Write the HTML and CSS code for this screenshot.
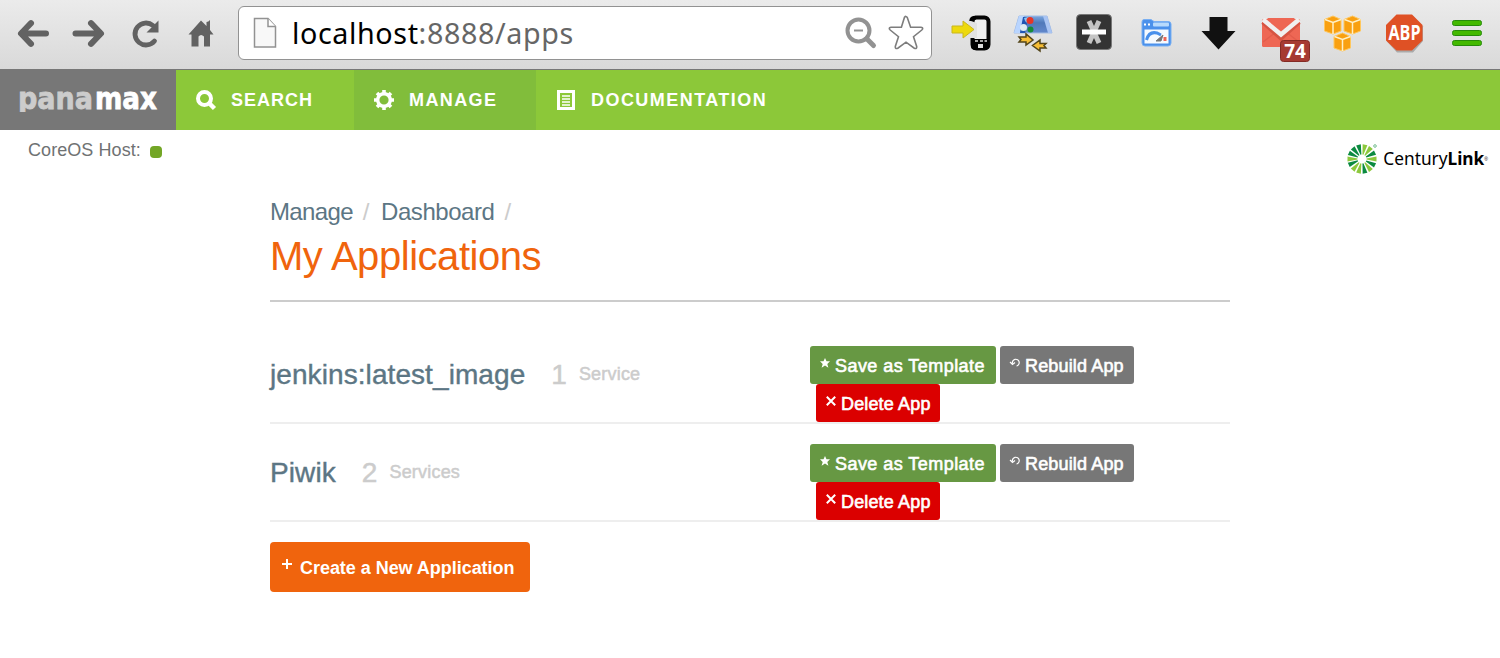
FILE: index.html
```html
<!DOCTYPE html>
<html lang="en">
<head>
<meta charset="utf-8">
<title>Panamax</title>
<link rel="stylesheet" href="styles.css">
</head>
<body>
<div class="toolbar">
  <div class="controls">
    <svg width="34" height="32" viewBox="0 0 34 32"><path class="arrow" d="M30 16.500H6M15 6.200L5 16.500L15 26.800"/></svg>
    <svg width="34" height="32" viewBox="0 0 34 32"><path class="arrow" d="M3.500 16.500H28.500M19 6.200L29 16.500L19 26.800"/></svg>
    <svg width="30" height="32" viewBox="0 0 30 32"><path d="M23.500 24A11 11 0 1 1 22 8.500" fill="none" stroke="#626262" stroke-width="4.800" stroke-linecap="round"/><path d="M27.500 3.500V15.500H15.500Z" fill="#626262"/></svg>
    <svg width="28" height="32" viewBox="0 0 28 32"><path d="M1.500 17.500L14 3.500L19.500 9V5Q21.500 5 23 3V13L26.500 17.500H23V29.500H17V19.500Q14 16.500 11.500 19.500V29.500H4.500V17.500Z" fill="#626262"/></svg>
  </div>
  <div class="omnibox">
    <svg class="page-icon" width="24" height="32" viewBox="0 0 24 32"><path d="M1.500 1.500H15L22.500 9.500V30H1.500Z" fill="#f8f8f8" stroke="#929292" stroke-width="1.500"/><path d="M15 1.500V9.500H22.500" fill="#fff" stroke="#929292" stroke-width="1.500"/></svg>
    <div class="url">localhost<span>:8888/apps</span></div>
    <svg width="32" height="32" viewBox="0 0 32 32"><circle cx="13.500" cy="13.500" r="11" fill="none" stroke="#929292" stroke-width="4"/><path d="M9 13.500H18" stroke="#929292" stroke-width="2"/><path d="M22 22L28.500 28.500" stroke="#929292" stroke-width="5" stroke-linecap="round"/></svg>
    <svg class="star" width="36" height="36" viewBox="0 0 36 36"><path d="M16.500 2.200Q18 .5 19.300 2.500L22.600 12.300H33Q36 13 33.800 15L25.500 21.700L28.700 31.500Q29 34.300 26.300 33.200L18 27.200L9.800 33.200Q7 34.300 7.300 31.500L10.500 21.700L2.200 15Q0 13 3 12.300H13.400Z" fill="#fff" stroke="#7d7d7d" stroke-width="1.600"/></svg>
  </div>
  <div class="extensions">
    <svg width="40" height="40" viewBox="0 0 40 40"><rect x="21.500" y="4.500" width="16" height="31" rx="4" fill="#eee" stroke="#050505" stroke-width="4"/><path d="M20 26H38V34Q38 36 35 37H23Q20 36 20 34Z"/><path d="M17 7L26 10V25H17Z" fill="#e2e2e1"/><path d="M20 8Q20 4.500 25 4.500" fill="none" stroke="#000" stroke-width="3.500"/><path d="M1 13V20H12V25L23 16.500L12 8V13Z" fill="#edd90c" stroke="#c9b61c"/><path d="M24 28H27M29 28H32M33.500 28H36" stroke="#ddd" stroke-width="1.500"/><rect x="27" y="31" width="5" height="4" fill="#ddd"/></svg>
    <svg width="40" height="40" viewBox="0 0 40 40"><defs><linearGradient id="awning" x2="0" y2="1"><stop stop-color="#7ca8e0"/><stop offset=".4" stop-color="#5079ba"/><stop offset="1" stop-color="#6388cc"/></linearGradient></defs><path d="M6 3H34L39 20H1Z" fill="url(#awning)" stroke="#a3bce3"/><path d="M6 3H11L7 20H1Z" fill="#b9d5ff"/><path d="M34 3L39 20H35L30 3Z" fill="#a9c4f3"/><path d="M10 4H15L12 20H7Z" fill="#2055b2"/><path d="M11 5Q13 12 17 9L15 4Z" fill="#8bc4f3"/><circle cx="17" cy="7.500" r="3.500" fill="#e73527"/><circle cx="10.500" cy="14.500" r="3.500" fill="#ddecf2"/><circle cx="17.500" cy="16.500" r="3" fill="#168b36"/><path d="M6 24H13V21L20 27L13 32V29H6L8 26.500Z" fill="#f6bd35" stroke="#54461b" stroke-width="1.500"/><path d="M33 30.500H27V27L19.500 32.500L27 38V35H33L31 32.500Z" fill="#f6bd35" stroke="#54461b" stroke-width="1.500"/></svg>
    <svg width="40" height="40" viewBox="0 0 40 40"><rect x="1.500" y="1.500" width="35" height="35" rx="4" fill="#343434" stroke="#777"/><path d="M14 8L24 30M24 8L14 30" fill="none" stroke="#c5c5c5" stroke-width="5"/><path d="M7 19H31" stroke="#fff" stroke-width="5"/></svg>
    <svg width="40" height="40" viewBox="0 0 40 40"><path d="M5 9Q5 6.500 7 6.500H14L17 8.500H31Q34 8.500 34 11V30Q34 33 31 33H8Q5 33 5 30Z" fill="#4b91eb" stroke="#79aff2"/><path d="M7 11.500H9M11 11.500H13" stroke="#fff" stroke-width="2"/><rect x="16" y="9.500" width="16" height="4" rx="1" fill="#b7dafd"/><rect x="7.500" y="16.500" width="24" height="14" fill="#f5faff"/><path d="M9.500 27Q12 18 20 20L24 22" fill="none" stroke="#4890ec" stroke-width="3"/><path d="M19 28L26 22L24 28Z" fill="#777" stroke="#777"/><path d="M28 24V28" stroke="#ee6556" stroke-width="3"/></svg>
    <svg width="40" height="40" viewBox="0 0 40 40"><path d="M11.500 4H29.500V18H37.500L20.500 36.500L3.500 18H11.500Z" fill="#111"/></svg>
    <svg class="mail" width="50" height="50" viewBox="0 0 50 50"><rect x="2" y="8" width="38" height="28" rx="1.500" fill="#ee6754"/><path d="M3 31L16 21M39 31L26 21" stroke="#e35d4c" stroke-width="1.500"/><path d="M3 11L21 27L39 11" fill="none" stroke="#d65443" stroke-width="5"/><path d="M3 8.500L21 23.500L39 8.500" fill="none" stroke="#f0f0f0" stroke-width="4.500"/><path d="M7 7H35L21 18.500Z" fill="#ee6754"/><rect x="20.500" y="29.500" width="29" height="21" rx="3" fill="#a63a32" stroke="#842b25"/><text x="35" y="47" text-anchor="middle">74</text></svg>
    <svg width="40" height="40" viewBox="0 0 40 40"><g id="aws"><path d="M1.500 6.500L10 3L18 6.500V18L10 21L1.500 18Z" fill="#f9a010" stroke="#ffc75d"/><path d="M2 6.500L10 9.500L18 6.500M10 9.500V21" fill="none" stroke="#fff0c7" stroke-width="1.500"/></g><use href="#aws" x="19.500"/><use href="#aws" x="9.500" y="17"/></svg>
    <svg class="abp" width="40" height="40" viewBox="0 0 40 40"><path d="M12 3H28L38 13.500V28L28 39.500H12L2 28.500V13.500Z" fill="#aaa"/><path d="M11.500 1.500H27L37.500 12V27.500L27 37.500H11.500L1 27.500V12Z" fill="#df5125"/><text x="3.500" y="27" textLength="32" lengthAdjust="spacingAndGlyphs">ABP</text></svg>
    <svg width="40" height="40" viewBox="0 0 40 40"><g fill="#43b900" stroke="#278b0b"><rect x="5.500" y="7.500" width="29" height="5" rx="2"/><rect x="5.500" y="17.500" width="29" height="5" rx="2"/><rect x="5.500" y="27.500" width="29" height="5" rx="2"/></g></svg>
  </div>
</div>
<nav class="nav">
  <a class="brand"><svg width="142" height="18" viewBox="0 0 142 18"><text class="pana" x="0" y="17.300" textLength="75" lengthAdjust="spacingAndGlyphs">pana</text><text class="max" x="77" y="17.300" textLength="62" lengthAdjust="spacingAndGlyphs">max</text><rect y="20" width="20" height="8" fill="#777"/></svg></a>
  <a class="tab search"><svg width="20" height="20" viewBox="0 0 20 20"><circle cx="8.500" cy="8.500" r="6.500" fill="none" stroke="#fff" stroke-width="4"/><path d="M13 13L18.500 18.500" stroke="#fff" stroke-width="4.500"/></svg>SEARCH</a>
  <a class="tab active"><svg width="20" height="20" viewBox="0 0 20 20"><circle cx="10" cy="10" r="6.300" fill="none" stroke="#fff" stroke-width="3.400"/><path d="M10 0V4M10 16V20M0 10H4M16 10H20M3 3L5.500 5.500M14.500 14.500L17 17M3 17L5.500 14.500M14.500 5.500L17 3" stroke="#fff" stroke-width="3.600"/></svg>MANAGE</a>
  <a class="tab docs"><svg width="20" height="20" viewBox="0 0 20 20"><path d="M2.500 1.500H17.500V18.500H2.500Z" fill="none" stroke="#fff" stroke-width="3"/><path d="M6 6H14M6 9H14M6 12H14M6 15H14" stroke="#fff" stroke-width="1.300"/></svg>DOCUMENTATION</a>
</nav>
<div class="status">
  <div class="host">CoreOS Host:<i></i></div>
  <div class="century">
    <svg width="30" height="32" viewBox="-15 -16 30 32"><g fill="#8cc83c"><path d="M-.5-4.500L-2.400-14.500H2.400L.5-4.500Z" transform="rotate(12)"/><path d="M-.5-4.500L-2.400-14.500H2.400L.5-4.500Z" transform="rotate(38)"/><path d="M-.5-4.500L-2.400-14.500H2.400L.5-4.500Z" fill="#0b8a40" transform="rotate(64)"/><path d="M-.5-4.500L-2.400-14.500H2.400L.5-4.500Z" transform="rotate(90)"/><path d="M-.5-4.500L-2.400-14.500H2.400L.5-4.500Z" fill="#0b8a40" transform="rotate(116)"/><path d="M-.5-4.500L-2.400-14.500H2.400L.5-4.500Z" transform="rotate(142)"/><path d="M-.5-4.500L-2.400-14.500H2.400L.5-4.500Z" fill="#0b8a40" transform="rotate(168)"/><path d="M-.5-4.500L-2.400-14.500H2.400L.5-4.500Z" transform="rotate(194)"/><path d="M-.5-4.500L-2.400-14.500H2.400L.5-4.500Z" transform="rotate(220)"/><path d="M-.5-4.500L-2.400-14.500H2.400L.5-4.500Z" fill="#0b8a40" transform="rotate(246)"/><path d="M-.5-4.500L-2.400-14.500H2.400L.5-4.500Z" transform="rotate(270)"/><path d="M-.5-4.500L-2.400-14.500H2.400L.5-4.500Z" fill="#0b8a40" transform="rotate(295)"/><path d="M-.5-4.500L-2.400-14.500H2.400L.5-4.500Z" fill="#0b8a40" transform="rotate(320)"/><path d="M-.5-4.500L-2.400-14.500H2.400L.5-4.500Z" fill="#0b8a40" transform="rotate(346)"/></g><circle cx="13" cy="-13" r="1.300" fill="none" stroke="#75bd90"/></svg>
    <span class="name">Century<b>Link</b></span><sup>®</sup>
  </div>
</div>
<main class="content">
  <header>
    <div class="crumbs"><a>Manage</a><i>/</i><a>Dashboard</a><i>/</i></div>
    <h1>My Applications</h1>
  </header>
  <section class="row">
    <div class="info"><a class="app">jenkins:latest_image</a><span class="count">1</span><span class="unit">Service</span></div>
    <div class="actions">
      <a class="btn save"><svg width="10" height="10" viewBox="0 0 10 10"><path d="M5 0L6.500 3.300H10L7.300 5.900L8.400 9.800L5 7.600L1.600 9.800L2.700 5.900L0 3.300H3.500Z" fill="#fff"/></svg>Save as Template</a>
      <a class="btn rebuild"><svg width="10" height="10" viewBox="0 0 10 10"><path d="M2.500 5.500A3.400 3.400 0 1 1 6.500 8M0 4L2.500 6.500L5 4.500" fill="none" stroke="#fff" stroke-width="1.200"/></svg>Rebuild App</a>
      <a class="btn delete"><svg width="10" height="10" viewBox="0 0 10 10"><path d="M.8.8L9.200 9.200M9.200.8L.8 9.200" stroke="#fff" stroke-width="2"/></svg>Delete App</a>
    </div>
  </section>
  <section class="row">
    <div class="info"><a class="app piwik">Piwik</a><span class="count">2</span><span class="unit">Services</span></div>
    <div class="actions">
      <a class="btn save"><svg width="10" height="10" viewBox="0 0 10 10"><path d="M5 0L6.500 3.300H10L7.300 5.900L8.400 9.800L5 7.600L1.600 9.800L2.700 5.900L0 3.300H3.500Z" fill="#fff"/></svg>Save as Template</a>
      <a class="btn rebuild"><svg width="10" height="10" viewBox="0 0 10 10"><path d="M2.500 5.500A3.400 3.400 0 1 1 6.500 8M0 4L2.500 6.500L5 4.500" fill="none" stroke="#fff" stroke-width="1.200"/></svg>Rebuild App</a>
      <a class="btn delete"><svg width="10" height="10" viewBox="0 0 10 10"><path d="M.8.8L9.200 9.200M9.200.8L.8 9.200" stroke="#fff" stroke-width="2"/></svg>Delete App</a>
    </div>
  </section>
  <a class="create"><svg width="10" height="10" viewBox="0 0 10 10"><path d="M5 0V10M0 5H10" stroke="#fff" stroke-width="2"/></svg>Create a New Application</a>
</main>
</body>
</html>
```
FILE: styles.css
```css
* { box-sizing: border-box; }
body { margin: 0; background: #fff; font-family: "Liberation Sans", sans-serif; font-size: 18px; color: #6f7273; }
svg { display: block; flex: none; overflow: visible; }
i { font-style: normal; }

.toolbar { display: flex; height: 70px; background: linear-gradient(#ebebeb, #d9d9d9); border-bottom: 1px solid #777; }
.controls { display: flex; width: 238px; padding: 17px 0 0 16px; }
.controls svg { margin-right: 22px; }
.controls svg:nth-child(2) { margin-right: 25px; }
.controls svg:nth-child(3) { margin-right: 26px; }
.controls svg:nth-child(4) { margin-right: 0; }
.arrow { fill: none; stroke: #626262; stroke-width: 6; stroke-linecap: round; stroke-linejoin: round; }

.omnibox { display: flex; align-items: center; width: 694px; height: 54px; margin-top: 6px; padding: 0 7px 0 14px; background: #fff; border: 1px solid #929292; border-radius: 6px; }
.page-icon { margin-right: 15px; }
.url { flex: 1; font: 28.700px/40px "Noto Sans", sans-serif; letter-spacing: .6px; color: #000; }
.url span { color: #666; }
.star { margin-left: 11px; }

.extensions { display: flex; padding: 13px 0 0 19px; gap: 22px; }
.extensions svg:nth-child(5) { margin-left: -1px; }
.mail { margin: -2px -9px 0 0; }
.mail text { font: bold 19px "Open Sans", sans-serif; fill: #fff; }
.abp text { font: bold 21px "Open Sans", sans-serif; fill: #fff; }

.nav { display: flex; height: 60px; background: #8cc839; }
.brand { display: flex; align-items: center; width: 176px; padding: 2px 0 0 18px; background: #777; }
.brand text { font: bold 30px "DejaVu Sans", sans-serif; stroke-width: .8; }
.pana { fill: #ccc; stroke: #ccc; }
.max { fill: #fff; stroke: #fff; }
.tab { display: flex; align-items: center; gap: 15px; padding-left: 20px; color: #fff; font-weight: bold; letter-spacing: 1px; }
.search { width: 178px; }
.active { width: 182px; background: #81bd3b; letter-spacing: 1.400px; }
.docs { letter-spacing: 1.450px; }

.status { display: flex; justify-content: space-between; height: 70px; padding: 10px 12px 0 28px; line-height: 20px; }
.host { display: flex; height: 24px; letter-spacing: .07px; }
.host i { width: 12px; height: 12px; margin: 6px 0 0 9px; border-radius: 4px; background: #73a626; }
.century { display: flex; align-items: center; height: 38px; color: #000; }
.name { margin-left: 6px; font: 17.300px/24px "Noto Sans", sans-serif; }
.century sup { font-size: 5px; line-height: 8px; }

.content { width: 960px; margin: 0 auto; }
header { height: 102px; border-bottom: 2px solid #ccc; }
.crumbs { display: flex; font-size: 24px; line-height: 24px; letter-spacing: -.45px; color: #5c7684; }
.crumbs a:first-child { letter-spacing: -.65px; }
.crumbs i { margin: 0 12px 0 10px; color: #ccc; }
h1 { margin: 12px 0 0; font-size: 40px; line-height: 40px; font-weight: normal; letter-spacing: -.45px; color: #f0640d; }

.row { display: flex; justify-content: space-between; height: 98px; border-bottom: 2px solid #eee; }
header + .row { height: 122px; padding-top: 24px; }
.info { display: flex; align-items: center; height: 57px; margin-top: 20px; color: #ccc; }
.app { font-size: 28px; letter-spacing: .08px; color: #5c7684; -webkit-text-stroke: .4px; }
.piwik { letter-spacing: .1px; }
.count { margin-left: 26px; font-size: 28px; -webkit-text-stroke: .5px; }
.unit { margin-left: 12px; letter-spacing: .2px; -webkit-text-stroke: .5px; }
.actions { display: flex; flex-wrap: wrap; align-content: flex-start; column-gap: 4px; width: 420px; padding-top: 20px; }
.btn { display: flex; height: 38px; padding-left: 10px; gap: 5px; border-radius: 3px; color: #fff; line-height: 40px; letter-spacing: .15px; white-space: nowrap; -webkit-text-stroke: .6px; }
.btn svg { margin-top: 12px; }
.save { width: 186px; background: #679843; letter-spacing: .45px; }
.rebuild { width: 134px; margin-right: 60px; background: #777; }
.delete { width: 124px; margin-left: 6px; background: #db0000; }
.create { display: flex; width: 260px; height: 50px; margin-top: 20px; padding-left: 12px; gap: 8px; border-radius: 4px; background: #f0640d; color: #fff; font-weight: bold; line-height: 52px; letter-spacing: -.04px; white-space: nowrap; }
.create svg { margin-top: 17px; }
```
